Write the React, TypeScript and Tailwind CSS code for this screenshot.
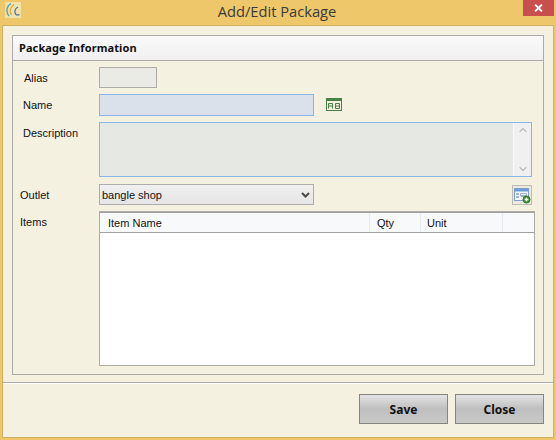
import React from 'react';
import { ChevronUp, ChevronDown } from 'lucide-react';

const TextIcon = () => (
  <svg width="16" height="13" viewBox="0 0 16 13" className="block">
    <rect x="0.5" y="0.5" width="15" height="12" fill="#f4f1e1" stroke="#4a8045" />
    <rect x="0" y="0" width="16" height="3" fill="#4a8045" />
    <path d="M2.500 10.500V5.500h4v5M2.500 8h4M9.500 5.500h4v5h-4zM9.500 8h4" fill="none" stroke="#4a8045" />
  </svg>
);

const AddIcon = () => (
  <svg width="20" height="20" viewBox="0 0 20 20" className="block">
    <rect x="0.5" y="0.5" width="19" height="19" fill="#eceae0" stroke="#bdbcb4" />
    <rect x="2.500" y="3.500" width="14" height="12" fill="#f3f6fb" stroke="#7f9fc8" />
    <rect x="3" y="4" width="13" height="2.500" fill="#6d9bd6" />
    <path d="M4 9h3M4 12h3" stroke="#4a76b0" />
    <path d="M8.500 8.500h6v2h-6zM8.500 11.500h4" fill="none" stroke="#9db2cc" />
    <circle cx="14.500" cy="14.500" r="3.500" fill="#4e9a3c" stroke="#2f6b2a" />
    <path d="M12.800 14.500h3.400M14.500 12.800v3.400" stroke="#fff" strokeWidth="1.300" />
  </svg>
);

const LogoIcon = () => (
  <svg width="16" height="16" viewBox="0 0 16 16" className="block">
    <rect width="16" height="16" fill="#f1e3a8" />
    <path d="M6 1.500C1.500 4 0.500 10 4 14" fill="none" stroke="#4aa3c4" strokeWidth="1.300" />
    <path d="M9 2.500C5 5 4 10 6.500 13" fill="none" stroke="#e0a93a" strokeWidth="1.300" />
    <path d="M13 5C9.500 6.500 9 11 11 12.500C12 13.200 13.500 13 14.500 12.500" fill="none" stroke="#3f62a8" strokeWidth="1.200" />
  </svg>
);

const SmallChevron = () => (
  <svg width="9" height="6" viewBox="0 0 9 6" className="block">
    <path d="M1 1l3.500 3.500L8 1" fill="none" stroke="#4a4a4a" strokeWidth="2" />
  </svg>
);

export default function App() {
  return (
    <div className="w-[556px] h-[440px] flex flex-col bg-[#efc76b] text-[11px] text-[#111] font-['Liberation_Sans',sans-serif]">
      {/* title bar */}
      <div className="h-[25px] shrink-0 flex items-start">
        <div className="ml-[5px] mt-[2px]">
          <LogoIcon />
        </div>
        <div className="flex-1 text-center text-[14.700px] leading-[22px] text-[#3a3a3a] font-['Open_Sans',sans-serif] pl-[10px]">
          Add/Edit Package
        </div>
        <div className="w-[31px] h-[16px] mr-[2px] bg-[#c94f4f] flex items-center justify-center">
          <svg width="9" height="8" viewBox="0 0 9 8">
            <path d="M1 0.500L8 7.500M8 0.500L1 7.500" stroke="#fff" strokeWidth="1.800" />
          </svg>
        </div>
      </div>

      {/* client area */}
      <div className="flex-1 mx-[2px] mb-[2px] border border-[#d1ad5e] bg-[#f4f1e1] flex flex-col">
        <div className="h-[349px] shrink-0 pt-[9px] pl-[9px] pr-[9px]">
          <div className="h-[340px] border border-[#adaba5] flex flex-col">
            <div className="h-[25px] shrink-0 border-b border-[#adaba5] bg-gradient-to-b from-[#fafafa] to-[#f0f0f0] pl-[6px] font-['Noto_Sans',sans-serif] font-bold text-[11px] leading-[24px] tracking-[0.1px]">
              Package Information
            </div>

            <div className="flex items-center mt-[6px] h-[21px]">
              <div className="w-[86px] pl-[11px] pt-[1px]">Alias</div>
              <div className="w-[58px] h-[21px] bg-[#e9ebe4] border border-[#adaba5]" />
            </div>

            <div className="flex items-center mt-[6px] h-[22px]">
              <div className="w-[86px] pl-[10px] pt-[1px]">Name</div>
              <div className="w-[215px] h-[22px] bg-[#dbe1ea] border border-[#8bb5e6]" />
              <div className="ml-[12px] -mt-[1px]">
                <TextIcon />
              </div>
            </div>

            <div className="flex items-start mt-[6px] h-[55px]">
              <div className="w-[86px] pl-[10px] pt-[3px]">Description</div>
              <div className="w-[433px] h-[55px] flex bg-[#e6e9e3] border border-[#8bb5e6]">
                <div className="flex-1" />
                <div className="w-[18px] bg-[#f0f0f0] border-l border-[#fafafa] flex flex-col items-center justify-between py-[1px]">
                  <ChevronUp size={12} strokeWidth={2.5} className="text-[#bdbdbd]" />
                  <ChevronDown size={12} strokeWidth={2.5} className="text-[#bdbdbd]" />
                </div>
              </div>
            </div>

            <div className="flex items-center mt-[7px] h-[21px]">
              <div className="w-[86px] pl-[7px] pt-[1px]">Outlet</div>
              <div className="w-[215px] h-[21px] flex items-center justify-between pl-[2px] pr-[3px] border border-[#adadad] bg-gradient-to-b from-[#f0f0f0] to-[#e5e5e5]">
                <span className="pt-[1px]">bangle shop</span>
                <SmallChevron />
              </div>
              <div className="ml-[198px]">
                <AddIcon />
              </div>
            </div>

            <div className="flex items-start mt-[6px] h-[155px]">
              <div className="w-[86px] pl-[7px] pt-[3px]">Items</div>
              <div className="w-[436px] h-[155px] bg-white border border-[#adaba5] flex flex-col">
                <div className="h-[21px] shrink-0 flex bg-[#f8f9fb] border-t border-b border-[#a0a0a0] leading-[20px]">
                  <div className="w-[270px] pl-[8px] border-r border-[#e6e9f0]">Item Name</div>
                  <div className="w-[51px] pl-[7px] border-r border-[#e6e9f0]">Qty</div>
                  <div className="w-[82px] pl-[6px] border-r border-[#e6e9f0]">Unit</div>
                  <div className="flex-1" />
                </div>
              </div>
            </div>
          </div>
        </div>

        {/* footer */}
        <div className="mt-[7px] border-t border-[#adaba5] shadow-[inset_0_1px_0_#fff] flex justify-end gap-[7px] pt-[11px] pr-[9px]">
          <button className="w-[89px] h-[30px] pt-[1px] border border-[#85857f] bg-gradient-to-b from-[#e4e4e4] via-[#bfbfbf] to-[#c9c9c9] font-['Noto_Sans',sans-serif] font-bold text-[12px]">
            Save
          </button>
          <button className="w-[89px] h-[30px] pt-[1px] border border-[#85857f] bg-gradient-to-b from-[#e4e4e4] via-[#bfbfbf] to-[#c9c9c9] font-['Noto_Sans',sans-serif] font-bold text-[12px]">
            Close
          </button>
        </div>
      </div>
    </div>
  );
}
